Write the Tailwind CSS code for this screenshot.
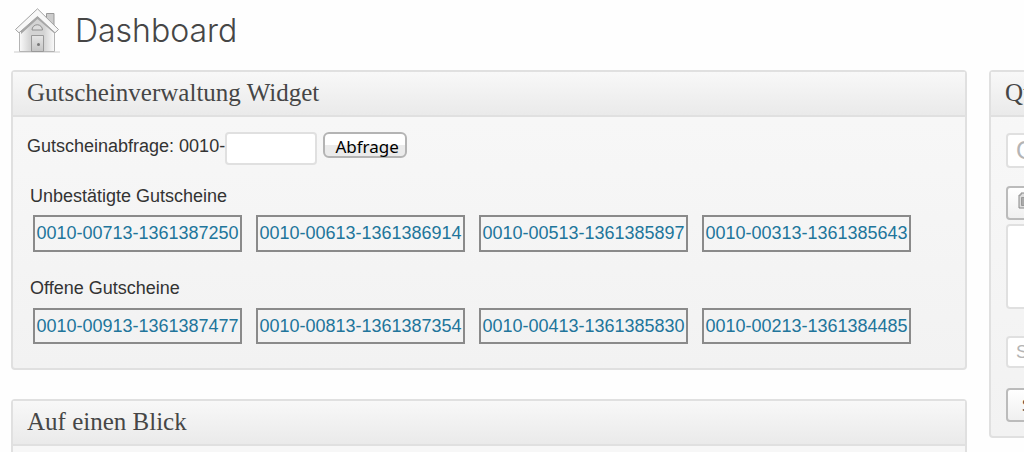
<!DOCTYPE html>
<html lang="de">
<head>
<meta charset="utf-8">
<title>Dashboard</title>
<script src="https://cdn.jsdelivr.net/npm/@tailwindcss/browser@4"></script>
</head>
<body class="h-screen overflow-hidden bg-[#fefefe] font-['Liberation_Sans',sans-serif] text-[18px] text-[#333]">
<header class="flex h-[70px] items-start gap-[13px] pl-[14px] pt-2">
  <svg class="h-[46px] w-[48px] shrink-0" viewBox="0 0 48 46" fill="none" aria-hidden="true">
    <defs>
      <linearGradient id="wall" x1="0" x2="1" y1="0" y2="0"><stop offset="0" stop-color="#fafafa"/><stop offset=".3" stop-color="#d4d4d4"/><stop offset=".7" stop-color="#d4d4d4"/><stop offset="1" stop-color="#fafafa"/></linearGradient>
      <linearGradient id="door" x1="0" x2="0" y1="0" y2="1"><stop stop-color="#e6e6e6"/><stop offset="1" stop-color="#c4c4c4"/></linearGradient>
    </defs>
    <path d="M0 44h46" stroke="#ccc"/>
    <path d="M32.500 5.500h7.500v16l-7.500-7z" fill="#ccc" stroke="#999"/>
    <path d="M5.500 24L23.500 7l17 17v19.500h-35z" fill="url(#wall)" stroke="#b4b4b4"/>
    <path d="M7 23L23.500 8 40 23v2L23.500 11 7 26z" fill="#a6a6a6"/>
    <path d="M23.500.8L44.500 21.500l-3.500 3.300L23.500 8.500 5 24.800 1.500 21.500z" fill="#f8f8f8" stroke="#a3a3a3"/>
    <path d="M18 22a5 5 0 0 1 10.500 0z" fill="#ddd" stroke="#909090"/>
    <path d="M17.500 43.500v-16h12v16z" fill="url(#door)" stroke="#999"/>
    <circle cx="24.500" cy="36.500" r="1.500" fill="#777"/>
  </svg>
  <h1 class="pt-1 font-[Inter,sans-serif] text-[32px] font-light leading-[38px] text-[#464646]">Dashboard</h1>
</header>
<div class="grid grid-cols-[calc(100%-57px)_460px] items-start gap-[22px] pl-[11px]">
  <main class="flex flex-col gap-[29px] pr-[11px] -mr-[11px]">
    <section class="h-[300px] rounded-[4px] border-2 border-[#e0e0e0] bg-linear-to-b from-[#f8f8f8] to-[#f2f2f2]">
      <h2 class="h-[45px] border-b-2 border-[#e0e0e0] bg-linear-to-b from-[#f8f8f8] to-[#eaeaea] pl-[14px] font-['Liberation_Serif',serif] text-[25px] leading-[42px] text-[#464646]">Gutscheinverwaltung Widget</h2>
      <div class="px-[14px] pt-[15px]">
        <form class="flex items-start">
          <label for="code" class="leading-[28px]">Gutscheinabfrage: 0010-</label>
          <input id="code" type="text" class="h-[33px] w-[92px] rounded-[4px] border-2 border-[#e0e0e0] bg-white px-1">
          <button type="button" class="ml-[6px] h-[26px] w-[84px] rounded-[6px] border-2 border-[#b4b4b4] bg-linear-to-b from-white from-50% to-[#ebebeb] to-50% pl-1 font-['Noto_Sans',sans-serif] text-[17px] leading-[25px] text-black">Abfrage</button>
        </form>
        <h3 class="mt-5 pl-[3px] leading-[22px]">Unbestätigte Gutscheine</h3>
        <ul class="mt-2 flex gap-[14px] pl-[6px] text-[#21759b]">
          <li><a href="#" class="flex h-[37px] w-[209px] items-center justify-center border-2 border-[#8a8a8a]">0010-00713-1361387250</a></li>
          <li><a href="#" class="flex h-[37px] w-[209px] items-center justify-center border-2 border-[#8a8a8a]">0010-00613-1361386914</a></li>
          <li><a href="#" class="flex h-[37px] w-[209px] items-center justify-center border-2 border-[#8a8a8a]">0010-00513-1361385897</a></li>
          <li><a href="#" class="flex h-[37px] w-[209px] items-center justify-center border-2 border-[#8a8a8a]">0010-00313-1361385643</a></li>
        </ul>
        <h3 class="mt-[25px] pl-[3px] leading-[22px]">Offene Gutscheine</h3>
        <ul class="mt-[9px] flex gap-[14px] pl-[6px] text-[#21759b]">
          <li><a href="#" class="flex h-[36px] w-[209px] items-center justify-center border-2 border-[#8a8a8a]">0010-00913-1361387477</a></li>
          <li><a href="#" class="flex h-[36px] w-[209px] items-center justify-center border-2 border-[#8a8a8a]">0010-00813-1361387354</a></li>
          <li><a href="#" class="flex h-[36px] w-[209px] items-center justify-center border-2 border-[#8a8a8a]">0010-00413-1361385830</a></li>
          <li><a href="#" class="flex h-[36px] w-[209px] items-center justify-center border-2 border-[#8a8a8a]">0010-00213-1361384485</a></li>
        </ul>
      </div>
    </section>
    <section class="h-[300px] rounded-[4px] border-2 border-[#e0e0e0] bg-[#f7f7f7]">
      <h2 class="h-[45px] border-b-2 border-[#e0e0e0] bg-linear-to-b from-[#f8f8f8] to-[#eaeaea] pl-[14px] font-['Liberation_Serif',serif] text-[25px] leading-[42px] text-[#464646]">Auf einen Blick</h2>
    </section>
  </main>
  <aside class="rounded-[4px] border-2 border-[#e0e0e0] bg-linear-to-b from-[#f8f8f8] to-[#f2f2f2]">
    <h2 class="h-[45px] border-b-2 border-[#e0e0e0] bg-linear-to-b from-[#f8f8f8] to-[#eaeaea] pl-[14px] font-['Liberation_Serif',serif] text-[25px] leading-[42px] text-[#464646]">QuickPress</h2>
    <form class="flex flex-col items-start px-[15px] pb-[14px] pt-4">
      <input type="text" aria-label="Titel" placeholder="Gib hier den Titel ein" class="h-[35px] w-full rounded-[4px] border-2 border-[#e0e0e0] bg-white px-2 text-[25px] leading-[30px] placeholder:text-[#b5b5b5]">
      <button type="button" aria-label="Dateien hinzufügen" class="mt-[18px] flex h-[34px] w-[180px] items-center rounded-[4px] border-2 border-[#bbb] bg-linear-to-b from-white to-[#f0f0f0] pl-[10px]">
        <svg class="mb-1 h-[18px] w-[20px]" viewBox="0 0 20 18" fill="none" aria-hidden="true"><path d="M1 3h2V1h9v2h6v13H1z" fill="#ddd" stroke="#888"/><path d="M3.500 5.500H16v8H3.500z" fill="#aaa" stroke="#999"/></svg>
      </button>
      <textarea aria-label="Inhalt" class="mt-1 block h-[85px] w-full resize-none rounded-[4px] border-2 border-[#e0e0e0] bg-white px-2"></textarea>
      <input type="text" aria-label="Schlagwörter" placeholder="Schlagwörter" class="mt-[27px] h-[32px] w-full rounded-[4px] border-2 border-[#e0e0e0] bg-white px-2 text-[18px] placeholder:text-[#b5b5b5]">
      <button type="button" class="mt-5 h-[34px] w-[180px] rounded-[4px] border-2 border-[#bbb] bg-linear-to-b from-white to-[#f0f0f0] pl-[14px] text-left font-['Noto_Sans',sans-serif] text-[17px] text-[#464646]">Speichern</button>
    </form>
  </aside>
</div>
</body>
</html>
